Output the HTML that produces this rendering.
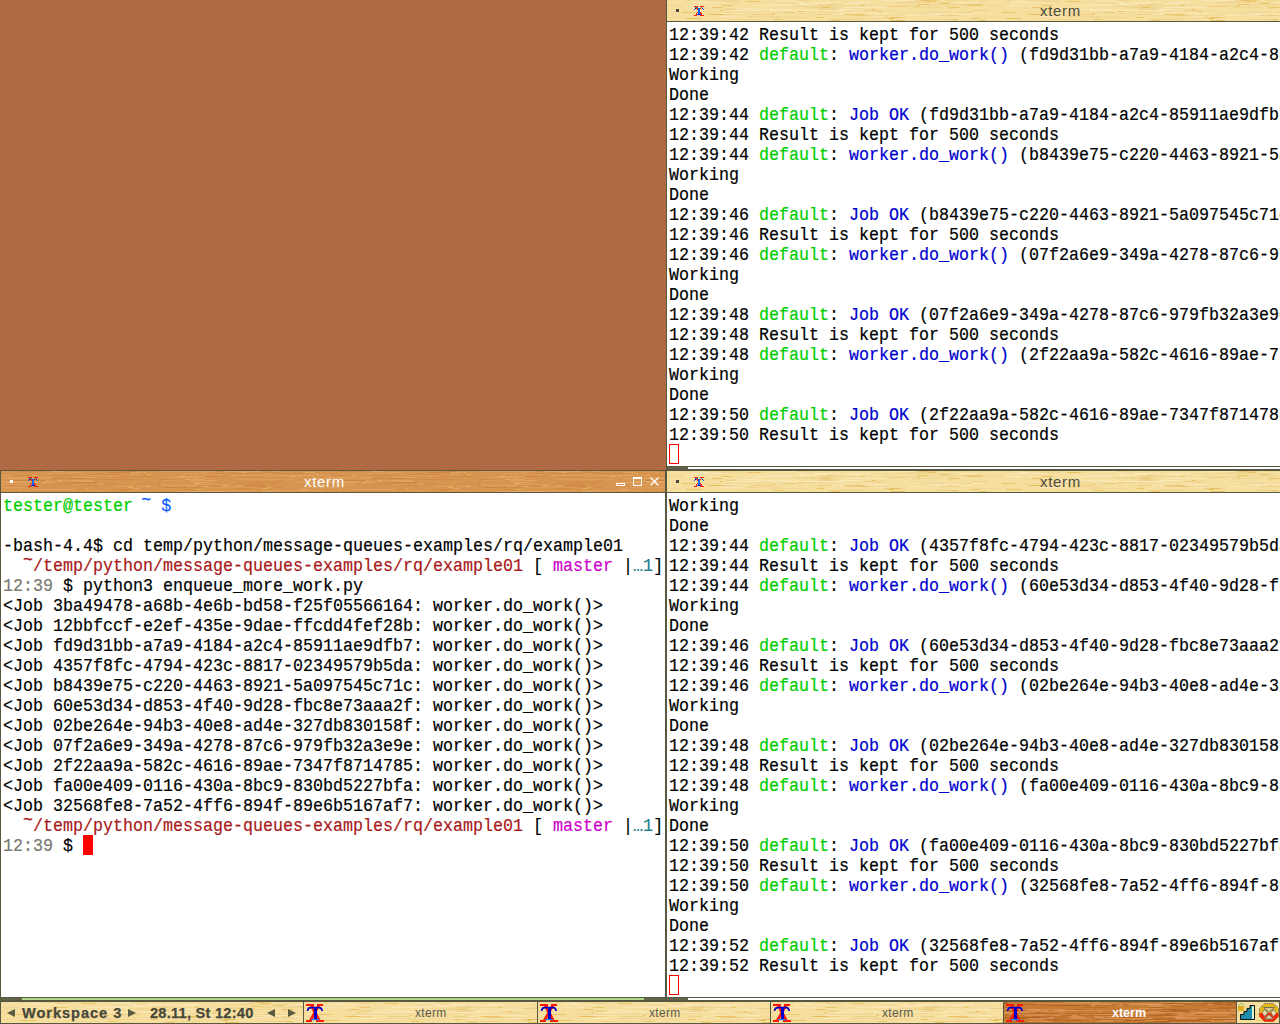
<!DOCTYPE html>
<html><head><meta charset="utf-8"><style>
html,body{margin:0;padding:0}
body{width:1280px;height:1024px;overflow:hidden;position:relative;background:#b06a43;font-family:"Liberation Mono",monospace}
.abs{position:absolute}
.ln{position:absolute;white-space:pre;font-family:"Liberation Mono",monospace;font-size:18px;line-height:20px;height:20px;color:#000;transform:scaleX(0.9259);transform-origin:0 0;-webkit-text-stroke:0.2px currentColor}
.dk{background:#585840}
.gp{background:#64644a}
.wl{background-color:#f3db9e;background-image:repeating-linear-gradient(180deg,rgba(235,200,110,0) 0px,rgba(235,200,110,0) 3px,rgba(232,196,100,.45) 3px,rgba(232,196,100,.45) 4px,rgba(255,240,190,.3) 4px,rgba(255,240,190,.3) 6px)}
.wa{background-color:#d8964e;background-image:repeating-linear-gradient(180deg,rgba(200,120,40,0) 0px,rgba(200,120,40,0) 3px,rgba(200,125,45,.5) 3px,rgba(200,125,45,.5) 4px,rgba(235,175,100,.4) 4px,rgba(235,175,100,.4) 6px)}
.wd{background-color:#c97c34;background-image:repeating-linear-gradient(180deg,rgba(180,100,30,0) 0px,rgba(180,100,30,0) 2px,rgba(170,95,25,.55) 2px,rgba(170,95,25,.55) 3px,rgba(230,160,90,.45) 3px,rgba(230,160,90,.45) 5px)}
.title{position:absolute;font-family:"Liberation Sans",sans-serif;font-size:15px;letter-spacing:0.7px;line-height:21px;height:21px;white-space:pre}
.tb{position:absolute;font-family:"Liberation Sans",sans-serif;white-space:pre;color:#5a5a40}
.tl{position:relative;top:-6px}
</style></head><body>
<svg width="0" height="0" style="position:absolute"><defs><pattern id="pwl" width="320" height="21" patternUnits="userSpaceOnUse"><rect width="320" height="21" fill="#f6de9e"/><rect x="291" y="2" width="19" height="1" fill="#fbebc0" opacity="0.7"/><rect x="253" y="14" width="33" height="1" fill="#ecd08a" opacity="0.6"/><rect x="107" y="3" width="34" height="1" fill="#f0d898" opacity="0.8"/><rect x="199" y="13" width="3" height="1" fill="#ecd08a" opacity="0.6"/><rect x="136" y="7" width="40" height="1" fill="#f0d898" opacity="0.8"/><rect x="162" y="0" width="4" height="1" fill="#ecd08a" opacity="0.6"/><rect x="277" y="0" width="27" height="1" fill="#ecd08a" opacity="0.6"/><rect x="216" y="0" width="36" height="1" fill="#fbebc0" opacity="0.7"/><rect x="224" y="15" width="38" height="1" fill="#fbebc0" opacity="0.7"/><rect x="176" y="7" width="46" height="1" fill="#fbebc0" opacity="0.7"/><rect x="235" y="9" width="4" height="1" fill="#fbebc0" opacity="0.7"/><rect x="284" y="20" width="9" height="1" fill="#f0d898" opacity="0.8"/><rect x="151" y="3" width="24" height="1" fill="#fbebc0" opacity="0.7"/><rect x="216" y="16" width="16" height="1" fill="#e0b038" opacity="0.55"/><rect x="155" y="9" width="40" height="1" fill="#fbebc0" opacity="0.7"/><rect x="258" y="12" width="40" height="1" fill="#f0d898" opacity="0.8"/><rect x="245" y="7" width="28" height="1" fill="#ecd08a" opacity="0.6"/><rect x="88" y="11" width="38" height="1" fill="#f0d898" opacity="0.8"/><rect x="44" y="14" width="24" height="1" fill="#e6c070" opacity="0.5"/><rect x="55" y="5" width="11" height="1" fill="#e0b038" opacity="0.55"/><rect x="189" y="15" width="49" height="1" fill="#f0d898" opacity="0.8"/><rect x="240" y="1" width="22" height="1" fill="#ecd08a" opacity="0.6"/><rect x="303" y="18" width="9" height="1" fill="#e0b038" opacity="0.55"/><rect x="86" y="16" width="17" height="1" fill="#fbebc0" opacity="0.7"/><rect x="102" y="17" width="38" height="1" fill="#ecd08a" opacity="0.6"/><rect x="207" y="16" width="25" height="1" fill="#fbebc0" opacity="0.7"/><rect x="180" y="14" width="17" height="1" fill="#e0b038" opacity="0.55"/><rect x="280" y="19" width="3" height="1" fill="#e6c070" opacity="0.5"/><rect x="262" y="4" width="36" height="1" fill="#f0d898" opacity="0.8"/><rect x="105" y="13" width="3" height="1" fill="#e0b038" opacity="0.55"/><rect x="186" y="18" width="38" height="1" fill="#f0d898" opacity="0.8"/><rect x="258" y="13" width="34" height="1" fill="#fbebc0" opacity="0.7"/><rect x="212" y="11" width="3" height="1" fill="#e6c070" opacity="0.5"/><rect x="276" y="19" width="15" height="1" fill="#e0b038" opacity="0.55"/><rect x="169" y="14" width="12" height="1" fill="#e0b038" opacity="0.55"/><rect x="117" y="20" width="14" height="1" fill="#ecd08a" opacity="0.6"/><rect x="299" y="5" width="16" height="1" fill="#e0b038" opacity="0.55"/><rect x="282" y="8" width="5" height="1" fill="#ecd08a" opacity="0.6"/><rect x="42" y="0" width="31" height="1" fill="#ecd08a" opacity="0.6"/><rect x="143" y="7" width="20" height="1" fill="#ecd08a" opacity="0.6"/><rect x="319" y="5" width="25" height="1" fill="#ecd08a" opacity="0.6"/><rect x="-1" y="5" width="25" height="1" fill="#ecd08a" opacity="0.6"/><rect x="35" y="5" width="8" height="1" fill="#e6c070" opacity="0.5"/><rect x="270" y="5" width="24" height="1" fill="#e6c070" opacity="0.5"/><rect x="150" y="14" width="13" height="1" fill="#e6c070" opacity="0.5"/><rect x="242" y="3" width="4" height="1" fill="#f0d898" opacity="0.8"/><rect x="197" y="10" width="16" height="1" fill="#e6c070" opacity="0.5"/><rect x="132" y="3" width="19" height="1" fill="#fbebc0" opacity="0.7"/><rect x="107" y="19" width="9" height="1" fill="#e0b038" opacity="0.55"/><rect x="115" y="0" width="28" height="1" fill="#ecd08a" opacity="0.6"/><rect x="18" y="5" width="31" height="1" fill="#fbebc0" opacity="0.7"/><rect x="218" y="17" width="16" height="1" fill="#e0b038" opacity="0.55"/><rect x="264" y="14" width="17" height="1" fill="#fbebc0" opacity="0.7"/><rect x="15" y="12" width="13" height="1" fill="#e0b038" opacity="0.55"/><rect x="164" y="20" width="9" height="1" fill="#e0b038" opacity="0.55"/><rect x="152" y="4" width="16" height="1" fill="#ecd08a" opacity="0.6"/><rect x="156" y="2" width="7" height="1" fill="#ecd08a" opacity="0.6"/><rect x="152" y="5" width="16" height="1" fill="#e6c070" opacity="0.5"/><rect x="129" y="4" width="3" height="1" fill="#e0b038" opacity="0.55"/><rect x="19" y="18" width="16" height="1" fill="#e0b038" opacity="0.55"/><rect x="291" y="14" width="13" height="1" fill="#fbebc0" opacity="0.7"/><rect x="260" y="1" width="9" height="1" fill="#e0b038" opacity="0.55"/><rect x="177" y="3" width="16" height="1" fill="#fbebc0" opacity="0.7"/><rect x="221" y="18" width="6" height="1" fill="#e0b038" opacity="0.55"/><rect x="53" y="12" width="21" height="1" fill="#f0d898" opacity="0.8"/><rect x="255" y="0" width="8" height="1" fill="#e0b038" opacity="0.55"/><rect x="205" y="9" width="3" height="1" fill="#e0b038" opacity="0.55"/><rect x="102" y="10" width="39" height="1" fill="#fbebc0" opacity="0.7"/><rect x="173" y="13" width="16" height="1" fill="#fbebc0" opacity="0.7"/><rect x="49" y="12" width="20" height="1" fill="#e6c070" opacity="0.5"/><rect x="273" y="15" width="20" height="1" fill="#e6c070" opacity="0.5"/><rect x="33" y="1" width="8" height="1" fill="#fbebc0" opacity="0.7"/><rect x="86" y="5" width="37" height="1" fill="#fbebc0" opacity="0.7"/><rect x="137" y="10" width="41" height="1" fill="#fbebc0" opacity="0.7"/><rect x="130" y="11" width="8" height="1" fill="#e0b038" opacity="0.55"/><rect x="58" y="9" width="10" height="1" fill="#e6c070" opacity="0.5"/><rect x="250" y="4" width="12" height="1" fill="#e0b038" opacity="0.55"/><rect x="53" y="10" width="3" height="1" fill="#e0b038" opacity="0.55"/><rect x="37" y="12" width="58" height="1" fill="#f0d898" opacity="0.8"/><rect x="64" y="10" width="10" height="1" fill="#fbebc0" opacity="0.7"/><rect x="300" y="12" width="4" height="1" fill="#e0b038" opacity="0.55"/><rect x="281" y="7" width="12" height="1" fill="#e0b038" opacity="0.55"/><rect x="136" y="11" width="21" height="1" fill="#ecd08a" opacity="0.6"/><rect x="273" y="3" width="10" height="1" fill="#e0b038" opacity="0.55"/><rect x="55" y="1" width="12" height="1" fill="#e6c070" opacity="0.5"/><rect x="314" y="0" width="8" height="1" fill="#ecd08a" opacity="0.6"/><rect x="-6" y="0" width="8" height="1" fill="#ecd08a" opacity="0.6"/><rect x="58" y="1" width="15" height="1" fill="#f0d898" opacity="0.8"/><rect x="300" y="13" width="13" height="1" fill="#fbebc0" opacity="0.7"/><rect x="230" y="5" width="18" height="1" fill="#ecd08a" opacity="0.6"/><rect x="52" y="13" width="27" height="1" fill="#fbebc0" opacity="0.7"/><rect x="150" y="17" width="7" height="1" fill="#e0b038" opacity="0.55"/><rect x="161" y="3" width="16" height="1" fill="#f0d898" opacity="0.8"/><rect x="20" y="0" width="3" height="1" fill="#e6c070" opacity="0.5"/><rect x="305" y="10" width="17" height="1" fill="#e6c070" opacity="0.5"/><rect x="-15" y="10" width="17" height="1" fill="#e6c070" opacity="0.5"/><rect x="160" y="12" width="7" height="1" fill="#f0d898" opacity="0.8"/><rect x="162" y="19" width="32" height="1" fill="#ecd08a" opacity="0.6"/><rect x="128" y="6" width="37" height="1" fill="#ecd08a" opacity="0.6"/><rect x="182" y="8" width="14" height="1" fill="#f0d898" opacity="0.8"/><rect x="106" y="9" width="6" height="1" fill="#e0b038" opacity="0.55"/><rect x="184" y="2" width="20" height="1" fill="#fbebc0" opacity="0.7"/><rect x="229" y="2" width="39" height="1" fill="#ecd08a" opacity="0.6"/><rect x="116" y="12" width="12" height="1" fill="#e6c070" opacity="0.5"/><rect x="167" y="5" width="23" height="1" fill="#ecd08a" opacity="0.6"/><rect x="155" y="7" width="8" height="1" fill="#e0b038" opacity="0.55"/><rect x="278" y="19" width="8" height="1" fill="#ecd08a" opacity="0.6"/><rect x="112" y="0" width="18" height="1" fill="#fbebc0" opacity="0.7"/><rect x="37" y="8" width="38" height="1" fill="#f0d898" opacity="0.8"/><rect x="38" y="0" width="3" height="1" fill="#ecd08a" opacity="0.6"/><rect x="183" y="15" width="18" height="1" fill="#e6c070" opacity="0.5"/><rect x="51" y="16" width="23" height="1" fill="#fbebc0" opacity="0.7"/><rect x="260" y="5" width="14" height="1" fill="#ecd08a" opacity="0.6"/><rect x="72" y="10" width="22" height="1" fill="#fbebc0" opacity="0.7"/><rect x="263" y="19" width="21" height="1" fill="#ecd08a" opacity="0.6"/><rect x="105" y="4" width="37" height="1" fill="#fbebc0" opacity="0.7"/><rect x="161" y="19" width="38" height="1" fill="#ecd08a" opacity="0.6"/><rect x="91" y="9" width="30" height="1" fill="#fbebc0" opacity="0.7"/><rect x="80" y="1" width="14" height="1" fill="#e0b038" opacity="0.55"/><rect x="129" y="2" width="46" height="1" fill="#fbebc0" opacity="0.7"/><rect x="220" y="17" width="19" height="1" fill="#f0d898" opacity="0.8"/><rect x="224" y="17" width="10" height="1" fill="#e0b038" opacity="0.55"/><rect x="202" y="10" width="13" height="1" fill="#ecd08a" opacity="0.6"/><rect x="248" y="0" width="23" height="1" fill="#e6c070" opacity="0.5"/><rect x="292" y="0" width="6" height="1" fill="#f0d898" opacity="0.8"/><rect x="296" y="4" width="21" height="1" fill="#e6c070" opacity="0.5"/><rect x="70" y="8" width="20" height="1" fill="#fbebc0" opacity="0.7"/><rect x="288" y="12" width="14" height="1" fill="#f0d898" opacity="0.8"/><rect x="45" y="7" width="10" height="1" fill="#e0b038" opacity="0.55"/><rect x="90" y="16" width="23" height="1" fill="#ecd08a" opacity="0.6"/><rect x="224" y="20" width="14" height="1" fill="#e0b038" opacity="0.55"/><rect x="122" y="10" width="34" height="1" fill="#fbebc0" opacity="0.7"/><rect x="115" y="13" width="24" height="1" fill="#f0d898" opacity="0.8"/><rect x="312" y="20" width="7" height="1" fill="#e0b038" opacity="0.55"/><rect x="24" y="2" width="35" height="1" fill="#fbebc0" opacity="0.7"/><rect x="81" y="16" width="9" height="1" fill="#e6c070" opacity="0.5"/><rect x="152" y="9" width="20" height="1" fill="#e6c070" opacity="0.5"/><rect x="84" y="14" width="22" height="1" fill="#e6c070" opacity="0.5"/><rect x="63" y="19" width="35" height="1" fill="#ecd08a" opacity="0.6"/><rect x="193" y="5" width="5" height="1" fill="#e0b038" opacity="0.55"/><rect x="218" y="6" width="21" height="1" fill="#e6c070" opacity="0.5"/><rect x="253" y="12" width="25" height="1" fill="#ecd08a" opacity="0.6"/><rect x="263" y="5" width="37" height="1" fill="#f0d898" opacity="0.8"/><rect x="268" y="2" width="19" height="1" fill="#ecd08a" opacity="0.6"/><rect x="136" y="2" width="11" height="1" fill="#ecd08a" opacity="0.6"/><rect x="41" y="14" width="16" height="1" fill="#e0b038" opacity="0.55"/><rect x="195" y="13" width="28" height="1" fill="#fbebc0" opacity="0.7"/><rect x="166" y="14" width="11" height="1" fill="#fbebc0" opacity="0.7"/><rect x="249" y="6" width="4" height="1" fill="#e0b038" opacity="0.55"/><rect x="307" y="17" width="29" height="1" fill="#f0d898" opacity="0.8"/><rect x="-13" y="17" width="29" height="1" fill="#f0d898" opacity="0.8"/><rect x="151" y="8" width="18" height="1" fill="#ecd08a" opacity="0.6"/><rect x="286" y="0" width="15" height="1" fill="#f0d898" opacity="0.8"/><rect x="224" y="18" width="3" height="1" fill="#e0b038" opacity="0.55"/></pattern><pattern id="pwa" width="320" height="21" patternUnits="userSpaceOnUse"><rect width="320" height="21" fill="#d8954f"/><rect x="46" y="2" width="26" height="1" fill="#e4ab6a" opacity="0.7"/><rect x="157" y="8" width="16" height="1" fill="#c9803c" opacity="0.6"/><rect x="18" y="18" width="4" height="1" fill="#f0c070" opacity="0.5"/><rect x="201" y="16" width="26" height="1" fill="#d08a45" opacity="0.8"/><rect x="227" y="16" width="5" height="1" fill="#f0c070" opacity="0.5"/><rect x="14" y="11" width="32" height="1" fill="#e4ab6a" opacity="0.7"/><rect x="194" y="13" width="59" height="1" fill="#e0a060" opacity="0.8"/><rect x="84" y="17" width="4" height="1" fill="#f0c070" opacity="0.5"/><rect x="118" y="0" width="14" height="1" fill="#c9803c" opacity="0.6"/><rect x="88" y="4" width="35" height="1" fill="#e0a060" opacity="0.8"/><rect x="184" y="16" width="7" height="1" fill="#f0c070" opacity="0.5"/><rect x="228" y="13" width="36" height="1" fill="#c9803c" opacity="0.6"/><rect x="303" y="11" width="26" height="1" fill="#e0a060" opacity="0.8"/><rect x="-17" y="11" width="26" height="1" fill="#e0a060" opacity="0.8"/><rect x="82" y="12" width="32" height="1" fill="#d08a45" opacity="0.8"/><rect x="127" y="15" width="5" height="1" fill="#f0c070" opacity="0.5"/><rect x="256" y="16" width="25" height="1" fill="#d08a45" opacity="0.8"/><rect x="236" y="11" width="39" height="1" fill="#d08a45" opacity="0.8"/><rect x="233" y="15" width="4" height="1" fill="#f0c070" opacity="0.5"/><rect x="85" y="19" width="20" height="1" fill="#e0a060" opacity="0.8"/><rect x="158" y="9" width="35" height="1" fill="#d08a45" opacity="0.8"/><rect x="265" y="16" width="7" height="1" fill="#f0c070" opacity="0.5"/><rect x="208" y="9" width="4" height="1" fill="#f0c070" opacity="0.5"/><rect x="262" y="11" width="7" height="1" fill="#d08a45" opacity="0.8"/><rect x="4" y="6" width="50" height="1" fill="#e0a060" opacity="0.8"/><rect x="30" y="18" width="44" height="1" fill="#e4ab6a" opacity="0.7"/><rect x="139" y="18" width="17" height="1" fill="#e4ab6a" opacity="0.7"/><rect x="267" y="4" width="20" height="1" fill="#e4ab6a" opacity="0.7"/><rect x="107" y="1" width="30" height="1" fill="#c9803c" opacity="0.6"/><rect x="29" y="11" width="26" height="1" fill="#e4ab6a" opacity="0.7"/><rect x="127" y="0" width="8" height="1" fill="#c9803c" opacity="0.6"/><rect x="34" y="0" width="5" height="1" fill="#e4ab6a" opacity="0.7"/><rect x="191" y="8" width="11" height="1" fill="#e4ab6a" opacity="0.7"/><rect x="94" y="16" width="3" height="1" fill="#c9803c" opacity="0.6"/><rect x="301" y="1" width="18" height="1" fill="#d08a45" opacity="0.8"/><rect x="18" y="0" width="25" height="1" fill="#c9803c" opacity="0.6"/><rect x="57" y="9" width="5" height="1" fill="#f0c070" opacity="0.5"/><rect x="15" y="9" width="31" height="1" fill="#d08a45" opacity="0.8"/><rect x="309" y="1" width="5" height="1" fill="#f0c070" opacity="0.5"/><rect x="318" y="4" width="33" height="1" fill="#d08a45" opacity="0.8"/><rect x="-2" y="4" width="33" height="1" fill="#d08a45" opacity="0.8"/><rect x="47" y="10" width="9" height="1" fill="#c9803c" opacity="0.6"/><rect x="229" y="4" width="36" height="1" fill="#e4ab6a" opacity="0.7"/><rect x="201" y="15" width="7" height="1" fill="#f0c070" opacity="0.5"/><rect x="73" y="10" width="19" height="1" fill="#e0a060" opacity="0.8"/><rect x="310" y="13" width="44" height="1" fill="#e0a060" opacity="0.8"/><rect x="-10" y="13" width="44" height="1" fill="#e0a060" opacity="0.8"/><rect x="285" y="4" width="45" height="1" fill="#e4ab6a" opacity="0.7"/><rect x="-35" y="4" width="45" height="1" fill="#e4ab6a" opacity="0.7"/><rect x="129" y="1" width="11" height="1" fill="#e4ab6a" opacity="0.7"/><rect x="87" y="3" width="32" height="1" fill="#c9803c" opacity="0.6"/><rect x="260" y="1" width="18" height="1" fill="#c9803c" opacity="0.6"/><rect x="227" y="2" width="19" height="1" fill="#c9803c" opacity="0.6"/><rect x="302" y="7" width="42" height="1" fill="#e4ab6a" opacity="0.7"/><rect x="-18" y="7" width="42" height="1" fill="#e4ab6a" opacity="0.7"/><rect x="184" y="8" width="6" height="1" fill="#f0c070" opacity="0.5"/><rect x="269" y="0" width="12" height="1" fill="#e0a060" opacity="0.8"/><rect x="196" y="13" width="13" height="1" fill="#e4ab6a" opacity="0.7"/><rect x="262" y="2" width="18" height="1" fill="#e4ab6a" opacity="0.7"/><rect x="51" y="0" width="14" height="1" fill="#e4ab6a" opacity="0.7"/><rect x="53" y="6" width="4" height="1" fill="#c9803c" opacity="0.6"/><rect x="237" y="14" width="5" height="1" fill="#f0c070" opacity="0.5"/><rect x="194" y="6" width="4" height="1" fill="#f0c070" opacity="0.5"/><rect x="217" y="16" width="4" height="1" fill="#d08a45" opacity="0.8"/><rect x="302" y="1" width="6" height="1" fill="#f0c070" opacity="0.5"/><rect x="297" y="5" width="3" height="1" fill="#f0c070" opacity="0.5"/><rect x="187" y="0" width="36" height="1" fill="#d08a45" opacity="0.8"/><rect x="312" y="11" width="21" height="1" fill="#e4ab6a" opacity="0.7"/><rect x="-8" y="11" width="21" height="1" fill="#e4ab6a" opacity="0.7"/><rect x="157" y="0" width="58" height="1" fill="#e0a060" opacity="0.8"/><rect x="51" y="3" width="22" height="1" fill="#d08a45" opacity="0.8"/><rect x="8" y="14" width="6" height="1" fill="#c9803c" opacity="0.6"/><rect x="248" y="14" width="16" height="1" fill="#d08a45" opacity="0.8"/><rect x="314" y="2" width="3" height="1" fill="#f0c070" opacity="0.5"/><rect x="12" y="11" width="22" height="1" fill="#e0a060" opacity="0.8"/><rect x="112" y="15" width="15" height="1" fill="#e4ab6a" opacity="0.7"/><rect x="292" y="11" width="28" height="1" fill="#e4ab6a" opacity="0.7"/><rect x="71" y="11" width="28" height="1" fill="#d08a45" opacity="0.8"/><rect x="130" y="3" width="10" height="1" fill="#e4ab6a" opacity="0.7"/><rect x="315" y="10" width="44" height="1" fill="#e4ab6a" opacity="0.7"/><rect x="-5" y="10" width="44" height="1" fill="#e4ab6a" opacity="0.7"/><rect x="108" y="3" width="4" height="1" fill="#d08a45" opacity="0.8"/><rect x="240" y="1" width="6" height="1" fill="#f0c070" opacity="0.5"/><rect x="183" y="14" width="12" height="1" fill="#e0a060" opacity="0.8"/><rect x="137" y="15" width="36" height="1" fill="#e0a060" opacity="0.8"/><rect x="214" y="15" width="21" height="1" fill="#d08a45" opacity="0.8"/><rect x="118" y="5" width="34" height="1" fill="#d08a45" opacity="0.8"/><rect x="132" y="17" width="6" height="1" fill="#f0c070" opacity="0.5"/><rect x="299" y="18" width="9" height="1" fill="#e4ab6a" opacity="0.7"/><rect x="182" y="5" width="37" height="1" fill="#e4ab6a" opacity="0.7"/><rect x="213" y="2" width="8" height="1" fill="#c9803c" opacity="0.6"/><rect x="65" y="9" width="27" height="1" fill="#e4ab6a" opacity="0.7"/><rect x="168" y="14" width="14" height="1" fill="#c9803c" opacity="0.6"/><rect x="146" y="3" width="4" height="1" fill="#f0c070" opacity="0.5"/><rect x="216" y="3" width="5" height="1" fill="#f0c070" opacity="0.5"/><rect x="127" y="16" width="5" height="1" fill="#f0c070" opacity="0.5"/><rect x="80" y="14" width="18" height="1" fill="#c9803c" opacity="0.6"/><rect x="183" y="18" width="12" height="1" fill="#d08a45" opacity="0.8"/><rect x="225" y="0" width="27" height="1" fill="#d08a45" opacity="0.8"/><rect x="201" y="16" width="6" height="1" fill="#c9803c" opacity="0.6"/><rect x="140" y="12" width="19" height="1" fill="#d08a45" opacity="0.8"/><rect x="241" y="11" width="38" height="1" fill="#d08a45" opacity="0.8"/><rect x="41" y="7" width="37" height="1" fill="#e0a060" opacity="0.8"/><rect x="96" y="12" width="6" height="1" fill="#f0c070" opacity="0.5"/><rect x="160" y="14" width="36" height="1" fill="#e4ab6a" opacity="0.7"/><rect x="90" y="3" width="4" height="1" fill="#d08a45" opacity="0.8"/><rect x="110" y="18" width="27" height="1" fill="#d08a45" opacity="0.8"/><rect x="51" y="12" width="38" height="1" fill="#c9803c" opacity="0.6"/><rect x="140" y="18" width="15" height="1" fill="#c9803c" opacity="0.6"/><rect x="313" y="4" width="3" height="1" fill="#d08a45" opacity="0.8"/><rect x="222" y="15" width="5" height="1" fill="#f0c070" opacity="0.5"/><rect x="289" y="5" width="6" height="1" fill="#f0c070" opacity="0.5"/><rect x="37" y="11" width="3" height="1" fill="#c9803c" opacity="0.6"/><rect x="272" y="2" width="34" height="1" fill="#d08a45" opacity="0.8"/><rect x="235" y="8" width="59" height="1" fill="#e0a060" opacity="0.8"/><rect x="235" y="0" width="3" height="1" fill="#f0c070" opacity="0.5"/><rect x="177" y="5" width="6" height="1" fill="#f0c070" opacity="0.5"/><rect x="69" y="1" width="13" height="1" fill="#e0a060" opacity="0.8"/><rect x="195" y="14" width="21" height="1" fill="#d08a45" opacity="0.8"/><rect x="5" y="9" width="38" height="1" fill="#c9803c" opacity="0.6"/><rect x="0" y="11" width="5" height="1" fill="#d08a45" opacity="0.8"/><rect x="195" y="18" width="6" height="1" fill="#f0c070" opacity="0.5"/><rect x="157" y="15" width="11" height="1" fill="#c9803c" opacity="0.6"/><rect x="275" y="9" width="7" height="1" fill="#d08a45" opacity="0.8"/><rect x="160" y="9" width="24" height="1" fill="#e0a060" opacity="0.8"/><rect x="201" y="16" width="56" height="1" fill="#e0a060" opacity="0.8"/><rect x="260" y="20" width="16" height="1" fill="#e4ab6a" opacity="0.7"/><rect x="305" y="16" width="12" height="1" fill="#d08a45" opacity="0.8"/><rect x="45" y="9" width="3" height="1" fill="#f0c070" opacity="0.5"/><rect x="234" y="17" width="17" height="1" fill="#c9803c" opacity="0.6"/><rect x="142" y="1" width="3" height="1" fill="#f0c070" opacity="0.5"/><rect x="194" y="11" width="16" height="1" fill="#e4ab6a" opacity="0.7"/><rect x="182" y="2" width="24" height="1" fill="#e0a060" opacity="0.8"/><rect x="185" y="5" width="34" height="1" fill="#d08a45" opacity="0.8"/><rect x="149" y="14" width="11" height="1" fill="#d08a45" opacity="0.8"/><rect x="110" y="8" width="23" height="1" fill="#d08a45" opacity="0.8"/><rect x="50" y="7" width="33" height="1" fill="#c9803c" opacity="0.6"/><rect x="191" y="5" width="25" height="1" fill="#c9803c" opacity="0.6"/><rect x="69" y="7" width="20" height="1" fill="#c9803c" opacity="0.6"/><rect x="193" y="12" width="5" height="1" fill="#f0c070" opacity="0.5"/><rect x="304" y="16" width="40" height="1" fill="#e0a060" opacity="0.8"/><rect x="-16" y="16" width="40" height="1" fill="#e0a060" opacity="0.8"/><rect x="204" y="20" width="51" height="1" fill="#e0a060" opacity="0.8"/><rect x="272" y="19" width="43" height="1" fill="#e0a060" opacity="0.8"/><rect x="188" y="9" width="28" height="1" fill="#e4ab6a" opacity="0.7"/><rect x="89" y="8" width="25" height="1" fill="#d08a45" opacity="0.8"/><rect x="244" y="2" width="14" height="1" fill="#d08a45" opacity="0.8"/><rect x="194" y="4" width="4" height="1" fill="#e0a060" opacity="0.8"/><rect x="179" y="5" width="25" height="1" fill="#e4ab6a" opacity="0.7"/><rect x="223" y="0" width="37" height="1" fill="#e4ab6a" opacity="0.7"/><rect x="121" y="19" width="27" height="1" fill="#e0a060" opacity="0.8"/><rect x="145" y="15" width="4" height="1" fill="#f0c070" opacity="0.5"/><rect x="161" y="6" width="34" height="1" fill="#e0a060" opacity="0.8"/><rect x="72" y="6" width="24" height="1" fill="#e4ab6a" opacity="0.7"/><rect x="72" y="13" width="26" height="1" fill="#e0a060" opacity="0.8"/><rect x="45" y="10" width="15" height="1" fill="#e0a060" opacity="0.8"/><rect x="122" y="19" width="5" height="1" fill="#c9803c" opacity="0.6"/><rect x="190" y="20" width="52" height="1" fill="#e0a060" opacity="0.8"/><rect x="31" y="4" width="4" height="1" fill="#f0c070" opacity="0.5"/><rect x="220" y="14" width="20" height="1" fill="#e4ab6a" opacity="0.7"/><rect x="164" y="16" width="39" height="1" fill="#c9803c" opacity="0.6"/><rect x="173" y="20" width="48" height="1" fill="#e4ab6a" opacity="0.7"/><rect x="202" y="7" width="3" height="1" fill="#f0c070" opacity="0.5"/><rect x="242" y="15" width="23" height="1" fill="#d08a45" opacity="0.8"/><rect x="318" y="19" width="3" height="1" fill="#f0c070" opacity="0.5"/><rect x="-2" y="19" width="3" height="1" fill="#f0c070" opacity="0.5"/><rect x="261" y="17" width="6" height="1" fill="#f0c070" opacity="0.5"/><rect x="232" y="5" width="29" height="1" fill="#d08a45" opacity="0.8"/><rect x="268" y="14" width="5" height="1" fill="#d08a45" opacity="0.8"/></pattern><pattern id="pwd" width="240" height="21" patternUnits="userSpaceOnUse"><rect width="240" height="21" fill="#c77c36"/><rect x="151" y="17" width="11" height="1" fill="#a85c1c" opacity="0.6"/><rect x="234" y="19" width="33" height="1" fill="#d89050" opacity="0.8"/><rect x="-6" y="19" width="33" height="1" fill="#d89050" opacity="0.8"/><rect x="155" y="0" width="33" height="1" fill="#e0a060" opacity="0.6"/><rect x="141" y="7" width="15" height="1" fill="#d89050" opacity="0.8"/><rect x="138" y="17" width="33" height="1" fill="#b86a28" opacity="0.8"/><rect x="163" y="4" width="17" height="1" fill="#b86a28" opacity="0.8"/><rect x="222" y="16" width="27" height="1" fill="#a85c1c" opacity="0.6"/><rect x="-18" y="16" width="27" height="1" fill="#a85c1c" opacity="0.6"/><rect x="171" y="2" width="13" height="1" fill="#e0a060" opacity="0.6"/><rect x="77" y="0" width="20" height="1" fill="#e0a060" opacity="0.6"/><rect x="152" y="12" width="48" height="1" fill="#b86a28" opacity="0.8"/><rect x="101" y="18" width="31" height="1" fill="#b86a28" opacity="0.8"/><rect x="224" y="11" width="9" height="1" fill="#a85c1c" opacity="0.6"/><rect x="34" y="15" width="16" height="1" fill="#e0a060" opacity="0.6"/><rect x="172" y="13" width="52" height="1" fill="#d89050" opacity="0.8"/><rect x="107" y="16" width="56" height="1" fill="#d89050" opacity="0.8"/><rect x="146" y="11" width="37" height="1" fill="#b86a28" opacity="0.8"/><rect x="149" y="7" width="24" height="1" fill="#b86a28" opacity="0.8"/><rect x="219" y="8" width="13" height="1" fill="#e0a060" opacity="0.6"/><rect x="138" y="18" width="39" height="1" fill="#d89050" opacity="0.8"/><rect x="182" y="20" width="16" height="1" fill="#e0a060" opacity="0.6"/><rect x="72" y="3" width="7" height="1" fill="#d89050" opacity="0.8"/><rect x="218" y="20" width="33" height="1" fill="#b86a28" opacity="0.8"/><rect x="-22" y="20" width="33" height="1" fill="#b86a28" opacity="0.8"/><rect x="88" y="2" width="29" height="1" fill="#e0a060" opacity="0.6"/><rect x="5" y="9" width="30" height="1" fill="#a85c1c" opacity="0.6"/><rect x="223" y="3" width="5" height="1" fill="#b86a28" opacity="0.8"/><rect x="96" y="18" width="24" height="1" fill="#e0a060" opacity="0.6"/><rect x="129" y="7" width="5" height="1" fill="#d89050" opacity="0.8"/><rect x="1" y="2" width="9" height="1" fill="#d89050" opacity="0.8"/><rect x="50" y="13" width="21" height="1" fill="#e0a060" opacity="0.6"/><rect x="39" y="1" width="58" height="1" fill="#d89050" opacity="0.8"/><rect x="80" y="11" width="11" height="1" fill="#d89050" opacity="0.8"/><rect x="96" y="14" width="36" height="1" fill="#b86a28" opacity="0.8"/><rect x="164" y="19" width="46" height="1" fill="#b86a28" opacity="0.8"/><rect x="158" y="16" width="20" height="1" fill="#e0a060" opacity="0.6"/><rect x="162" y="7" width="22" height="1" fill="#b86a28" opacity="0.8"/><rect x="66" y="16" width="22" height="1" fill="#b86a28" opacity="0.8"/><rect x="2" y="13" width="40" height="1" fill="#d89050" opacity="0.8"/><rect x="5" y="12" width="42" height="1" fill="#d89050" opacity="0.8"/><rect x="15" y="20" width="24" height="1" fill="#a85c1c" opacity="0.6"/><rect x="90" y="11" width="41" height="1" fill="#b86a28" opacity="0.8"/><rect x="188" y="15" width="4" height="1" fill="#d89050" opacity="0.8"/><rect x="173" y="0" width="26" height="1" fill="#e0a060" opacity="0.6"/><rect x="160" y="14" width="22" height="1" fill="#d89050" opacity="0.8"/><rect x="45" y="11" width="14" height="1" fill="#d89050" opacity="0.8"/><rect x="194" y="11" width="57" height="1" fill="#d89050" opacity="0.8"/><rect x="-46" y="11" width="57" height="1" fill="#d89050" opacity="0.8"/><rect x="76" y="12" width="9" height="1" fill="#d89050" opacity="0.8"/><rect x="145" y="4" width="22" height="1" fill="#e0a060" opacity="0.6"/><rect x="167" y="8" width="18" height="1" fill="#a85c1c" opacity="0.6"/><rect x="47" y="13" width="44" height="1" fill="#d89050" opacity="0.8"/><rect x="26" y="19" width="23" height="1" fill="#e0a060" opacity="0.6"/><rect x="172" y="7" width="31" height="1" fill="#d89050" opacity="0.8"/><rect x="20" y="10" width="16" height="1" fill="#a85c1c" opacity="0.6"/><rect x="69" y="7" width="10" height="1" fill="#b86a28" opacity="0.8"/><rect x="135" y="6" width="23" height="1" fill="#e0a060" opacity="0.6"/><rect x="221" y="8" width="24" height="1" fill="#a85c1c" opacity="0.6"/><rect x="-19" y="8" width="24" height="1" fill="#a85c1c" opacity="0.6"/><rect x="206" y="19" width="25" height="1" fill="#e0a060" opacity="0.6"/><rect x="107" y="9" width="36" height="1" fill="#a85c1c" opacity="0.6"/><rect x="118" y="11" width="43" height="1" fill="#d89050" opacity="0.8"/><rect x="74" y="13" width="39" height="1" fill="#b86a28" opacity="0.8"/><rect x="9" y="13" width="12" height="1" fill="#b86a28" opacity="0.8"/><rect x="1" y="15" width="35" height="1" fill="#a85c1c" opacity="0.6"/><rect x="143" y="7" width="5" height="1" fill="#b86a28" opacity="0.8"/><rect x="214" y="16" width="21" height="1" fill="#b86a28" opacity="0.8"/><rect x="227" y="7" width="58" height="1" fill="#d89050" opacity="0.8"/><rect x="-13" y="7" width="58" height="1" fill="#d89050" opacity="0.8"/><rect x="219" y="18" width="21" height="1" fill="#e0a060" opacity="0.6"/><rect x="207" y="7" width="5" height="1" fill="#e0a060" opacity="0.6"/><rect x="231" y="16" width="15" height="1" fill="#e0a060" opacity="0.6"/><rect x="-9" y="16" width="15" height="1" fill="#e0a060" opacity="0.6"/><rect x="147" y="1" width="3" height="1" fill="#b86a28" opacity="0.8"/><rect x="190" y="3" width="13" height="1" fill="#b86a28" opacity="0.8"/><rect x="61" y="0" width="36" height="1" fill="#d89050" opacity="0.8"/><rect x="13" y="19" width="10" height="1" fill="#b86a28" opacity="0.8"/><rect x="32" y="8" width="58" height="1" fill="#d89050" opacity="0.8"/><rect x="207" y="1" width="25" height="1" fill="#b86a28" opacity="0.8"/><rect x="50" y="3" width="37" height="1" fill="#a85c1c" opacity="0.6"/><rect x="43" y="7" width="20" height="1" fill="#e0a060" opacity="0.6"/><rect x="210" y="0" width="34" height="1" fill="#a85c1c" opacity="0.6"/><rect x="-30" y="0" width="34" height="1" fill="#a85c1c" opacity="0.6"/><rect x="12" y="8" width="18" height="1" fill="#b86a28" opacity="0.8"/><rect x="158" y="16" width="36" height="1" fill="#d89050" opacity="0.8"/><rect x="13" y="15" width="23" height="1" fill="#b86a28" opacity="0.8"/><rect x="219" y="1" width="11" height="1" fill="#e0a060" opacity="0.6"/><rect x="31" y="1" width="7" height="1" fill="#e0a060" opacity="0.6"/><rect x="8" y="2" width="35" height="1" fill="#b86a28" opacity="0.8"/><rect x="80" y="5" width="23" height="1" fill="#b86a28" opacity="0.8"/><rect x="89" y="12" width="27" height="1" fill="#e0a060" opacity="0.6"/><rect x="92" y="8" width="15" height="1" fill="#d89050" opacity="0.8"/><rect x="109" y="3" width="11" height="1" fill="#d89050" opacity="0.8"/><rect x="183" y="12" width="8" height="1" fill="#e0a060" opacity="0.6"/><rect x="10" y="11" width="32" height="1" fill="#a85c1c" opacity="0.6"/><rect x="162" y="1" width="42" height="1" fill="#b86a28" opacity="0.8"/><rect x="13" y="11" width="43" height="1" fill="#b86a28" opacity="0.8"/><rect x="194" y="10" width="29" height="1" fill="#b86a28" opacity="0.8"/><rect x="117" y="0" width="18" height="1" fill="#b86a28" opacity="0.8"/><rect x="137" y="8" width="7" height="1" fill="#a85c1c" opacity="0.6"/><rect x="57" y="13" width="11" height="1" fill="#b86a28" opacity="0.8"/><rect x="239" y="10" width="26" height="1" fill="#e0a060" opacity="0.6"/><rect x="-1" y="10" width="26" height="1" fill="#e0a060" opacity="0.6"/><rect x="31" y="14" width="47" height="1" fill="#d89050" opacity="0.8"/><rect x="208" y="16" width="27" height="1" fill="#e0a060" opacity="0.6"/><rect x="187" y="10" width="39" height="1" fill="#e0a060" opacity="0.6"/><rect x="207" y="18" width="3" height="1" fill="#e0a060" opacity="0.6"/><rect x="36" y="7" width="27" height="1" fill="#b86a28" opacity="0.8"/><rect x="134" y="2" width="39" height="1" fill="#e0a060" opacity="0.6"/><rect x="168" y="12" width="14" height="1" fill="#e0a060" opacity="0.6"/><rect x="87" y="3" width="4" height="1" fill="#e0a060" opacity="0.6"/><rect x="172" y="15" width="21" height="1" fill="#e0a060" opacity="0.6"/><rect x="204" y="2" width="5" height="1" fill="#d89050" opacity="0.8"/><rect x="27" y="17" width="9" height="1" fill="#a85c1c" opacity="0.6"/><rect x="140" y="10" width="39" height="1" fill="#e0a060" opacity="0.6"/><rect x="211" y="2" width="18" height="1" fill="#a85c1c" opacity="0.6"/><rect x="165" y="7" width="32" height="1" fill="#a85c1c" opacity="0.6"/><rect x="64" y="11" width="41" height="1" fill="#b86a28" opacity="0.8"/><rect x="89" y="17" width="29" height="1" fill="#b86a28" opacity="0.8"/><rect x="96" y="16" width="18" height="1" fill="#e0a060" opacity="0.6"/><rect x="215" y="5" width="29" height="1" fill="#b86a28" opacity="0.8"/><rect x="-25" y="5" width="29" height="1" fill="#b86a28" opacity="0.8"/><rect x="39" y="20" width="28" height="1" fill="#b86a28" opacity="0.8"/><rect x="41" y="3" width="34" height="1" fill="#a85c1c" opacity="0.6"/><rect x="234" y="16" width="31" height="1" fill="#b86a28" opacity="0.8"/><rect x="-6" y="16" width="31" height="1" fill="#b86a28" opacity="0.8"/><rect x="34" y="8" width="15" height="1" fill="#a85c1c" opacity="0.6"/><rect x="149" y="16" width="23" height="1" fill="#a85c1c" opacity="0.6"/><rect x="217" y="17" width="21" height="1" fill="#a85c1c" opacity="0.6"/><rect x="152" y="18" width="40" height="1" fill="#b86a28" opacity="0.8"/><rect x="227" y="6" width="22" height="1" fill="#d89050" opacity="0.8"/><rect x="-13" y="6" width="22" height="1" fill="#d89050" opacity="0.8"/><rect x="68" y="15" width="27" height="1" fill="#e0a060" opacity="0.6"/><rect x="44" y="18" width="26" height="1" fill="#a85c1c" opacity="0.6"/><rect x="82" y="15" width="12" height="1" fill="#a85c1c" opacity="0.6"/><rect x="178" y="15" width="47" height="1" fill="#b86a28" opacity="0.8"/><rect x="119" y="18" width="38" height="1" fill="#a85c1c" opacity="0.6"/><rect x="123" y="2" width="28" height="1" fill="#e0a060" opacity="0.6"/><rect x="119" y="7" width="18" height="1" fill="#e0a060" opacity="0.6"/><rect x="55" y="8" width="18" height="1" fill="#e0a060" opacity="0.6"/><rect x="198" y="8" width="11" height="1" fill="#a85c1c" opacity="0.6"/><rect x="159" y="1" width="19" height="1" fill="#a85c1c" opacity="0.6"/><rect x="221" y="1" width="23" height="1" fill="#a85c1c" opacity="0.6"/><rect x="-19" y="1" width="23" height="1" fill="#a85c1c" opacity="0.6"/><rect x="108" y="2" width="8" height="1" fill="#a85c1c" opacity="0.6"/><rect x="23" y="8" width="21" height="1" fill="#e0a060" opacity="0.6"/><rect x="91" y="14" width="24" height="1" fill="#e0a060" opacity="0.6"/><rect x="7" y="10" width="24" height="1" fill="#e0a060" opacity="0.6"/><rect x="97" y="15" width="7" height="1" fill="#b86a28" opacity="0.8"/><rect x="164" y="18" width="34" height="1" fill="#a85c1c" opacity="0.6"/><rect x="32" y="17" width="23" height="1" fill="#b86a28" opacity="0.8"/><rect x="226" y="8" width="7" height="1" fill="#e0a060" opacity="0.6"/><rect x="28" y="14" width="36" height="1" fill="#b86a28" opacity="0.8"/><rect x="24" y="16" width="47" height="1" fill="#d89050" opacity="0.8"/><rect x="173" y="11" width="51" height="1" fill="#d89050" opacity="0.8"/><rect x="75" y="20" width="19" height="1" fill="#b86a28" opacity="0.8"/><rect x="193" y="10" width="39" height="1" fill="#e0a060" opacity="0.6"/><rect x="170" y="15" width="35" height="1" fill="#e0a060" opacity="0.6"/><rect x="15" y="9" width="46" height="1" fill="#d89050" opacity="0.8"/><rect x="165" y="20" width="12" height="1" fill="#a85c1c" opacity="0.6"/><rect x="94" y="20" width="32" height="1" fill="#a85c1c" opacity="0.6"/><rect x="27" y="17" width="12" height="1" fill="#e0a060" opacity="0.6"/><rect x="165" y="20" width="41" height="1" fill="#d89050" opacity="0.8"/><rect x="142" y="9" width="44" height="1" fill="#b86a28" opacity="0.8"/><rect x="117" y="15" width="22" height="1" fill="#a85c1c" opacity="0.6"/><rect x="180" y="2" width="9" height="1" fill="#a85c1c" opacity="0.6"/><rect x="193" y="17" width="37" height="1" fill="#a85c1c" opacity="0.6"/><rect x="91" y="3" width="20" height="1" fill="#b86a28" opacity="0.8"/><rect x="98" y="1" width="58" height="1" fill="#d89050" opacity="0.8"/><rect x="10" y="15" width="35" height="1" fill="#a85c1c" opacity="0.6"/><rect x="63" y="16" width="25" height="1" fill="#d89050" opacity="0.8"/><rect x="103" y="14" width="37" height="1" fill="#d89050" opacity="0.8"/><rect x="90" y="15" width="10" height="1" fill="#e0a060" opacity="0.6"/><rect x="69" y="18" width="9" height="1" fill="#a85c1c" opacity="0.6"/><rect x="144" y="3" width="14" height="1" fill="#e0a060" opacity="0.6"/><rect x="145" y="13" width="28" height="1" fill="#a85c1c" opacity="0.6"/><rect x="151" y="19" width="12" height="1" fill="#a85c1c" opacity="0.6"/><rect x="204" y="6" width="37" height="1" fill="#b86a28" opacity="0.8"/><rect x="-36" y="6" width="37" height="1" fill="#b86a28" opacity="0.8"/><rect x="145" y="5" width="15" height="1" fill="#a85c1c" opacity="0.6"/><rect x="94" y="9" width="4" height="1" fill="#d89050" opacity="0.8"/><rect x="228" y="13" width="27" height="1" fill="#b86a28" opacity="0.8"/><rect x="-12" y="13" width="27" height="1" fill="#b86a28" opacity="0.8"/><rect x="141" y="18" width="22" height="1" fill="#d89050" opacity="0.8"/><rect x="135" y="9" width="45" height="1" fill="#b86a28" opacity="0.8"/><rect x="7" y="19" width="15" height="1" fill="#b86a28" opacity="0.8"/><rect x="27" y="7" width="34" height="1" fill="#e0a060" opacity="0.6"/><rect x="134" y="20" width="32" height="1" fill="#a85c1c" opacity="0.6"/><rect x="49" y="16" width="16" height="1" fill="#a85c1c" opacity="0.6"/><rect x="208" y="16" width="31" height="1" fill="#e0a060" opacity="0.6"/><rect x="144" y="9" width="12" height="1" fill="#e0a060" opacity="0.6"/><rect x="119" y="2" width="6" height="1" fill="#a85c1c" opacity="0.6"/><rect x="92" y="19" width="17" height="1" fill="#e0a060" opacity="0.6"/><rect x="127" y="17" width="4" height="1" fill="#e0a060" opacity="0.6"/></pattern></defs></svg>
<div class="abs dk" style="left:666px;top:0;width:1px;height:470px"></div>
<svg class="abs" style="left:667px;top:0px" width="613" height="21"><rect width="613" height="21" fill="url(#pwl)"/></svg>
<div class="abs dk" style="left:667px;top:21px;width:613px;height:1px"></div>
<div class="abs" style="left:667px;top:22px;width:613px;height:444px;background:#fff;overflow:hidden"><div class="ln" style="left:2px;top:3px">12:39:42 Result is kept for 500 seconds</div>
<div class="ln" style="left:2px;top:23px">12:39:42 <span style="color:#00cd00">default</span>: <span style="color:#0000cd">worker.do_work()</span> (fd9d31bb-a7a9-4184-a2c4-85911ae9dfb7)</div>
<div class="ln" style="left:2px;top:43px">Working</div>
<div class="ln" style="left:2px;top:63px">Done</div>
<div class="ln" style="left:2px;top:83px">12:39:44 <span style="color:#00cd00">default</span>: <span style="color:#0000cd">Job OK</span> (fd9d31bb-a7a9-4184-a2c4-85911ae9dfb7)</div>
<div class="ln" style="left:2px;top:103px">12:39:44 Result is kept for 500 seconds</div>
<div class="ln" style="left:2px;top:123px">12:39:44 <span style="color:#00cd00">default</span>: <span style="color:#0000cd">worker.do_work()</span> (b8439e75-c220-4463-8921-5a097545c71c)</div>
<div class="ln" style="left:2px;top:143px">Working</div>
<div class="ln" style="left:2px;top:163px">Done</div>
<div class="ln" style="left:2px;top:183px">12:39:46 <span style="color:#00cd00">default</span>: <span style="color:#0000cd">Job OK</span> (b8439e75-c220-4463-8921-5a097545c71c)</div>
<div class="ln" style="left:2px;top:203px">12:39:46 Result is kept for 500 seconds</div>
<div class="ln" style="left:2px;top:223px">12:39:46 <span style="color:#00cd00">default</span>: <span style="color:#0000cd">worker.do_work()</span> (07f2a6e9-349a-4278-87c6-979fb32a3e9e)</div>
<div class="ln" style="left:2px;top:243px">Working</div>
<div class="ln" style="left:2px;top:263px">Done</div>
<div class="ln" style="left:2px;top:283px">12:39:48 <span style="color:#00cd00">default</span>: <span style="color:#0000cd">Job OK</span> (07f2a6e9-349a-4278-87c6-979fb32a3e9e)</div>
<div class="ln" style="left:2px;top:303px">12:39:48 Result is kept for 500 seconds</div>
<div class="ln" style="left:2px;top:323px">12:39:48 <span style="color:#00cd00">default</span>: <span style="color:#0000cd">worker.do_work()</span> (2f22aa9a-582c-4616-89ae-7347f8714785)</div>
<div class="ln" style="left:2px;top:343px">Working</div>
<div class="ln" style="left:2px;top:363px">Done</div>
<div class="ln" style="left:2px;top:383px">12:39:50 <span style="color:#00cd00">default</span>: <span style="color:#0000cd">Job OK</span> (2f22aa9a-582c-4616-89ae-7347f8714785)</div>
<div class="ln" style="left:2px;top:403px">12:39:50 Result is kept for 500 seconds</div><div class="abs" style="left:2px;top:422px;width:8px;height:18px;border:1px solid #ff0000"></div></div>
<div class="abs dk" style="left:667px;top:466px;width:613px;height:4px"></div>
<div class="abs gp" style="left:667px;top:467px;width:21px;height:2px"></div>
<div class="abs" style="left:688px;top:467px;width:592px;height:2px;background:#fff"></div>
<div class="abs" style="left:676px;top:9px;width:3px;height:3px;background:#4a4a3a"></div>
<svg style="position:absolute;left:694px;top:6px" width="10" height="10" shape-rendering="crispEdges"><rect x="0" y="0" width="4" height="1" fill="#ff1a00"/><rect x="6" y="0" width="4" height="1" fill="#ff1a00"/><rect x="1" y="1" width="3" height="1" fill="#2a8a9a"/><rect x="7" y="1" width="1" height="1" fill="#2a8a9a"/><rect x="1" y="2" width="1" height="1" fill="#0000d0"/><rect x="2" y="2" width="2" height="1" fill="#ff1a00"/><rect x="6" y="2" width="1" height="1" fill="#ff1a00"/><rect x="8" y="2" width="1" height="1" fill="#0000d0"/><rect x="0" y="3" width="1" height="1" fill="#0a6aff"/><rect x="3" y="3" width="1" height="1" fill="#ff1a00"/><rect x="9" y="3" width="1" height="1" fill="#0a6aff"/><rect x="4" y="2" width="2" height="7" fill="#0a6aff"/><rect x="3" y="6" width="1" height="1" fill="#ff1a00"/><rect x="6" y="6" width="1" height="1" fill="#ff1a00"/><rect x="2" y="7" width="1" height="1" fill="#ff1a00"/><rect x="6" y="7" width="2" height="1" fill="#ff1a00"/><rect x="2" y="8" width="1" height="1" fill="#ff1a00"/><rect x="3" y="8" width="4" height="1" fill="#0a6aff"/><rect x="4" y="8" width="2" height="1" fill="#0000d0"/><rect x="7" y="8" width="1" height="1" fill="#ff1a00"/><rect x="0" y="9" width="3" height="1" fill="#ff1a00"/><rect x="6" y="9" width="4" height="1" fill="#ff1a00"/></svg>
<div class="title" style="left:1040px;top:0;color:#4c4c40">xterm</div>
<div class="abs dk" style="left:0;top:470px;width:666px;height:531px"></div>
<svg class="abs" style="left:1px;top:471px" width="664" height="21"><rect width="664" height="21" fill="url(#pwa)"/></svg>
<div class="abs" style="left:1px;top:493px;width:664px;height:504px;background:#fff;overflow:hidden"><div class="ln" style="left:2px;top:3px"><span style="color:#00cd00">tester@tester</span> <span class="tl" style="color:#0a5cff;left:-2px">~</span><span style="color:#0a5cff;position:relative;left:-2px"> $</span></div>
<div class="ln" style="left:2px;top:43px">-bash-4.4$ cd temp/python/message-queues-examples/rq/example01</div>
<div class="ln" style="left:2px;top:63px">  <span class="tl" style="color:#a81818">~</span><span style="color:#a81818">/temp/python/message-queues-examples/rq/example01</span> [ <span style="color:#cc00cc">master</span> |<span style="color:#1a7f8f">…1</span>]</div>
<div class="ln" style="left:2px;top:83px"><span style="color:#787870">12:39</span> $ python3 enqueue_more_work.py</div>
<div class="ln" style="left:2px;top:103px">&lt;Job 3ba49478-a68b-4e6b-bd58-f25f05566164: worker.do_work()&gt;</div>
<div class="ln" style="left:2px;top:123px">&lt;Job 12bbfccf-e2ef-435e-9dae-ffcdd4fef28b: worker.do_work()&gt;</div>
<div class="ln" style="left:2px;top:143px">&lt;Job fd9d31bb-a7a9-4184-a2c4-85911ae9dfb7: worker.do_work()&gt;</div>
<div class="ln" style="left:2px;top:163px">&lt;Job 4357f8fc-4794-423c-8817-02349579b5da: worker.do_work()&gt;</div>
<div class="ln" style="left:2px;top:183px">&lt;Job b8439e75-c220-4463-8921-5a097545c71c: worker.do_work()&gt;</div>
<div class="ln" style="left:2px;top:203px">&lt;Job 60e53d34-d853-4f40-9d28-fbc8e73aaa2f: worker.do_work()&gt;</div>
<div class="ln" style="left:2px;top:223px">&lt;Job 02be264e-94b3-40e8-ad4e-327db830158f: worker.do_work()&gt;</div>
<div class="ln" style="left:2px;top:243px">&lt;Job 07f2a6e9-349a-4278-87c6-979fb32a3e9e: worker.do_work()&gt;</div>
<div class="ln" style="left:2px;top:263px">&lt;Job 2f22aa9a-582c-4616-89ae-7347f8714785: worker.do_work()&gt;</div>
<div class="ln" style="left:2px;top:283px">&lt;Job fa00e409-0116-430a-8bc9-830bd5227bfa: worker.do_work()&gt;</div>
<div class="ln" style="left:2px;top:303px">&lt;Job 32568fe8-7a52-4ff6-894f-89e6b5167af7: worker.do_work()&gt;</div>
<div class="ln" style="left:2px;top:323px">  <span class="tl" style="color:#a81818">~</span><span style="color:#a81818">/temp/python/message-queues-examples/rq/example01</span> [ <span style="color:#cc00cc">master</span> |<span style="color:#1a7f8f">…1</span>]</div>
<div class="ln" style="left:2px;top:343px"><span style="color:#787870">12:39</span> $ </div><div class="abs" style="left:82px;top:342px;width:10px;height:20px;background:#ff0000"></div></div>
<div class="abs gp" style="left:1px;top:998px;width:21px;height:2px"></div>
<div class="abs" style="left:22px;top:998px;width:622px;height:2px;background:#b0d888"></div>
<div class="abs gp" style="left:644px;top:998px;width:21px;height:2px"></div>
<div class="abs" style="left:10px;top:480px;width:3px;height:3px;background:#fff"></div>
<svg style="position:absolute;left:28px;top:477px" width="10" height="10" shape-rendering="crispEdges"><rect x="0" y="0" width="4" height="1" fill="#ff1a00"/><rect x="6" y="0" width="4" height="1" fill="#ff1a00"/><rect x="1" y="1" width="3" height="1" fill="#2a8a9a"/><rect x="7" y="1" width="1" height="1" fill="#2a8a9a"/><rect x="1" y="2" width="1" height="1" fill="#0000d0"/><rect x="2" y="2" width="2" height="1" fill="#ff1a00"/><rect x="6" y="2" width="1" height="1" fill="#ff1a00"/><rect x="8" y="2" width="1" height="1" fill="#0000d0"/><rect x="0" y="3" width="1" height="1" fill="#0a6aff"/><rect x="3" y="3" width="1" height="1" fill="#ff1a00"/><rect x="9" y="3" width="1" height="1" fill="#0a6aff"/><rect x="4" y="2" width="2" height="7" fill="#0a6aff"/><rect x="3" y="6" width="1" height="1" fill="#ff1a00"/><rect x="6" y="6" width="1" height="1" fill="#ff1a00"/><rect x="2" y="7" width="1" height="1" fill="#ff1a00"/><rect x="6" y="7" width="2" height="1" fill="#ff1a00"/><rect x="2" y="8" width="1" height="1" fill="#ff1a00"/><rect x="3" y="8" width="4" height="1" fill="#0a6aff"/><rect x="4" y="8" width="2" height="1" fill="#0000d0"/><rect x="7" y="8" width="1" height="1" fill="#ff1a00"/><rect x="0" y="9" width="3" height="1" fill="#ff1a00"/><rect x="6" y="9" width="4" height="1" fill="#ff1a00"/></svg>
<div class="title" style="left:304px;top:471px;color:#fff">xterm</div>
<div class="abs" style="left:616px;top:483px;width:7px;height:1px;border:1px solid #fff"></div>
<div class="abs" style="left:633px;top:477px;width:7px;height:6px;border:1px solid #fff;border-top-width:2px"></div>
<svg class="abs" style="left:650px;top:477px" width="9" height="10"><path d="M0.5,0.5 L8.5,8.5 M8.5,0.5 L0.5,8.5" stroke="#fff" stroke-width="1.2"/></svg>
<div class="abs dk" style="left:666px;top:470px;width:614px;height:531px"></div>
<svg class="abs" style="left:667px;top:471px" width="613" height="21"><rect width="613" height="21" fill="url(#pwl)"/></svg>
<div class="abs" style="left:667px;top:493px;width:613px;height:504px;background:#fff;overflow:hidden"><div class="ln" style="left:2px;top:3px">Working</div>
<div class="ln" style="left:2px;top:23px">Done</div>
<div class="ln" style="left:2px;top:43px">12:39:44 <span style="color:#00cd00">default</span>: <span style="color:#0000cd">Job OK</span> (4357f8fc-4794-423c-8817-02349579b5da)</div>
<div class="ln" style="left:2px;top:63px">12:39:44 Result is kept for 500 seconds</div>
<div class="ln" style="left:2px;top:83px">12:39:44 <span style="color:#00cd00">default</span>: <span style="color:#0000cd">worker.do_work()</span> (60e53d34-d853-4f40-9d28-fbc8e73aaa2f)</div>
<div class="ln" style="left:2px;top:103px">Working</div>
<div class="ln" style="left:2px;top:123px">Done</div>
<div class="ln" style="left:2px;top:143px">12:39:46 <span style="color:#00cd00">default</span>: <span style="color:#0000cd">Job OK</span> (60e53d34-d853-4f40-9d28-fbc8e73aaa2f)</div>
<div class="ln" style="left:2px;top:163px">12:39:46 Result is kept for 500 seconds</div>
<div class="ln" style="left:2px;top:183px">12:39:46 <span style="color:#00cd00">default</span>: <span style="color:#0000cd">worker.do_work()</span> (02be264e-94b3-40e8-ad4e-327db830158f)</div>
<div class="ln" style="left:2px;top:203px">Working</div>
<div class="ln" style="left:2px;top:223px">Done</div>
<div class="ln" style="left:2px;top:243px">12:39:48 <span style="color:#00cd00">default</span>: <span style="color:#0000cd">Job OK</span> (02be264e-94b3-40e8-ad4e-327db830158f)</div>
<div class="ln" style="left:2px;top:263px">12:39:48 Result is kept for 500 seconds</div>
<div class="ln" style="left:2px;top:283px">12:39:48 <span style="color:#00cd00">default</span>: <span style="color:#0000cd">worker.do_work()</span> (fa00e409-0116-430a-8bc9-830bd5227bfa)</div>
<div class="ln" style="left:2px;top:303px">Working</div>
<div class="ln" style="left:2px;top:323px">Done</div>
<div class="ln" style="left:2px;top:343px">12:39:50 <span style="color:#00cd00">default</span>: <span style="color:#0000cd">Job OK</span> (fa00e409-0116-430a-8bc9-830bd5227bfa)</div>
<div class="ln" style="left:2px;top:363px">12:39:50 Result is kept for 500 seconds</div>
<div class="ln" style="left:2px;top:383px">12:39:50 <span style="color:#00cd00">default</span>: <span style="color:#0000cd">worker.do_work()</span> (32568fe8-7a52-4ff6-894f-89e6b5167af7)</div>
<div class="ln" style="left:2px;top:403px">Working</div>
<div class="ln" style="left:2px;top:423px">Done</div>
<div class="ln" style="left:2px;top:443px">12:39:52 <span style="color:#00cd00">default</span>: <span style="color:#0000cd">Job OK</span> (32568fe8-7a52-4ff6-894f-89e6b5167af7)</div>
<div class="ln" style="left:2px;top:463px">12:39:52 Result is kept for 500 seconds</div><div class="abs" style="left:2px;top:482px;width:8px;height:18px;border:1px solid #ff0000"></div></div>
<div class="abs gp" style="left:667px;top:998px;width:21px;height:2px"></div>
<div class="abs" style="left:688px;top:998px;width:592px;height:2px;background:#fff"></div>
<div class="abs" style="left:676px;top:480px;width:3px;height:3px;background:#4a4a3a"></div>
<svg style="position:absolute;left:694px;top:477px" width="10" height="10" shape-rendering="crispEdges"><rect x="0" y="0" width="4" height="1" fill="#ff1a00"/><rect x="6" y="0" width="4" height="1" fill="#ff1a00"/><rect x="1" y="1" width="3" height="1" fill="#2a8a9a"/><rect x="7" y="1" width="1" height="1" fill="#2a8a9a"/><rect x="1" y="2" width="1" height="1" fill="#0000d0"/><rect x="2" y="2" width="2" height="1" fill="#ff1a00"/><rect x="6" y="2" width="1" height="1" fill="#ff1a00"/><rect x="8" y="2" width="1" height="1" fill="#0000d0"/><rect x="0" y="3" width="1" height="1" fill="#0a6aff"/><rect x="3" y="3" width="1" height="1" fill="#ff1a00"/><rect x="9" y="3" width="1" height="1" fill="#0a6aff"/><rect x="4" y="2" width="2" height="7" fill="#0a6aff"/><rect x="3" y="6" width="1" height="1" fill="#ff1a00"/><rect x="6" y="6" width="1" height="1" fill="#ff1a00"/><rect x="2" y="7" width="1" height="1" fill="#ff1a00"/><rect x="6" y="7" width="2" height="1" fill="#ff1a00"/><rect x="2" y="8" width="1" height="1" fill="#ff1a00"/><rect x="3" y="8" width="4" height="1" fill="#0a6aff"/><rect x="4" y="8" width="2" height="1" fill="#0000d0"/><rect x="7" y="8" width="1" height="1" fill="#ff1a00"/><rect x="0" y="9" width="3" height="1" fill="#ff1a00"/><rect x="6" y="9" width="4" height="1" fill="#ff1a00"/></svg>
<div class="title" style="left:1040px;top:471px;color:#4c4c40">xterm</div>
<div class="abs dk" style="left:0;top:1001px;width:1280px;height:23px"></div>
<svg class="abs" style="left:1px;top:1002px" width="302" height="21"><rect width="302" height="21" fill="url(#pwl)"/></svg>
<svg class="abs" style="left:304px;top:1002px" width="233" height="21"><rect width="233" height="21" fill="url(#pwl)"/></svg>
<svg style="position:absolute;left:306px;top:1004px" width="18" height="18">
<rect x="0" y="0" width="8" height="2" fill="#ff1a00"/><rect x="11" y="0" width="6" height="2" fill="#ff1a00"/>
<polygon points="4,2 7.5,2 14.5,16 11,16" fill="#ff1a00"/>
<polygon points="11,2 14,2 6.5,16 3,16" fill="#ff1a00"/>
<rect x="0" y="16" width="6" height="2" fill="#ff1a00"/><rect x="10" y="16" width="8" height="2" fill="#ff1a00"/>
<path d="M1.5,7 Q2,3.6 4.5,3.6 L13.5,3.6 Q15.5,3.6 16.3,7" stroke="#0000cc" stroke-width="1.6" fill="none"/>
<rect x="8" y="3" width="3" height="12" fill="#0000cc"/>
<rect x="5" y="15" width="8" height="1.2" fill="#1a7fff"/>
</svg>
<div class="tb" style="left:415px;top:1003px;font-size:12px;letter-spacing:0.3px;line-height:21px;color:#5c5c4c">xterm</div>
<svg class="abs" style="left:538px;top:1002px" width="232" height="21"><rect width="232" height="21" fill="url(#pwl)"/></svg>
<svg style="position:absolute;left:540px;top:1004px" width="18" height="18">
<rect x="0" y="0" width="8" height="2" fill="#ff1a00"/><rect x="11" y="0" width="6" height="2" fill="#ff1a00"/>
<polygon points="4,2 7.5,2 14.5,16 11,16" fill="#ff1a00"/>
<polygon points="11,2 14,2 6.5,16 3,16" fill="#ff1a00"/>
<rect x="0" y="16" width="6" height="2" fill="#ff1a00"/><rect x="10" y="16" width="8" height="2" fill="#ff1a00"/>
<path d="M1.5,7 Q2,3.6 4.5,3.6 L13.5,3.6 Q15.5,3.6 16.3,7" stroke="#0000cc" stroke-width="1.6" fill="none"/>
<rect x="8" y="3" width="3" height="12" fill="#0000cc"/>
<rect x="5" y="15" width="8" height="1.2" fill="#1a7fff"/>
</svg>
<div class="tb" style="left:649px;top:1003px;font-size:12px;letter-spacing:0.3px;line-height:21px;color:#5c5c4c">xterm</div>
<svg class="abs" style="left:771px;top:1002px" width="232" height="21"><rect width="232" height="21" fill="url(#pwl)"/></svg>
<svg style="position:absolute;left:773px;top:1004px" width="18" height="18">
<rect x="0" y="0" width="8" height="2" fill="#ff1a00"/><rect x="11" y="0" width="6" height="2" fill="#ff1a00"/>
<polygon points="4,2 7.5,2 14.5,16 11,16" fill="#ff1a00"/>
<polygon points="11,2 14,2 6.5,16 3,16" fill="#ff1a00"/>
<rect x="0" y="16" width="6" height="2" fill="#ff1a00"/><rect x="10" y="16" width="8" height="2" fill="#ff1a00"/>
<path d="M1.5,7 Q2,3.6 4.5,3.6 L13.5,3.6 Q15.5,3.6 16.3,7" stroke="#0000cc" stroke-width="1.6" fill="none"/>
<rect x="8" y="3" width="3" height="12" fill="#0000cc"/>
<rect x="5" y="15" width="8" height="1.2" fill="#1a7fff"/>
</svg>
<div class="tb" style="left:882px;top:1003px;font-size:12px;letter-spacing:0.3px;line-height:21px;color:#5c5c4c">xterm</div>
<svg class="abs" style="left:1004px;top:1002px" width="232" height="21"><rect width="232" height="21" fill="url(#pwd)"/></svg>
<svg style="position:absolute;left:1006px;top:1004px" width="18" height="18">
<rect x="0" y="0" width="8" height="2" fill="#ff1a00"/><rect x="11" y="0" width="6" height="2" fill="#ff1a00"/>
<polygon points="4,2 7.5,2 14.5,16 11,16" fill="#ff1a00"/>
<polygon points="11,2 14,2 6.5,16 3,16" fill="#ff1a00"/>
<rect x="0" y="16" width="6" height="2" fill="#ff1a00"/><rect x="10" y="16" width="8" height="2" fill="#ff1a00"/>
<path d="M1.5,7 Q2,3.6 4.5,3.6 L13.5,3.6 Q15.5,3.6 16.3,7" stroke="#0000cc" stroke-width="1.6" fill="none"/>
<rect x="8" y="3" width="3" height="12" fill="#0000cc"/>
<rect x="5" y="15" width="8" height="1.2" fill="#1a7fff"/>
</svg>
<div class="tb" style="left:1112px;top:1003px;font-size:12.5px;line-height:21px;font-weight:bold;color:#fff">xterm</div>
<svg class="abs" style="left:1237px;top:1002px" width="42" height="21"><rect width="42" height="21" fill="url(#pwl)"/></svg>
<svg class="abs" style="left:1237px;top:1002px" width="43" height="21">
<rect x="1" y="4" width="6" height="5" fill="#e0b020"/>
<path d="M2,4.5 Q2,1.5 4.5,1.5 Q6.5,1.5 6.5,3.5" stroke="#90c070" stroke-width="1" fill="none"/>
<polygon points="3.5,12.5 7,12.5 7,9.5 10,9.5 10,6.5 13,6.5 13,3.5 17.5,3.5 17.5,17.5 3.5,17.5" fill="#1f8fb0" stroke="#101010" stroke-width="1"/>
<rect x="15" y="4" width="2" height="13" fill="#e8f4d0"/>
<polygon points="27.5,1.5 36.5,1.5 41.5,6.5 41.5,14.5 36.5,19.5 27.5,19.5 22.5,14.5 22.5,6.5" fill="#e8b818" stroke="#707060" stroke-width="1" stroke-dasharray="1.5,0.7"/>
<polygon points="22.5,11 41.5,11 41.5,14.5 36.5,19.5 27.5,19.5 22.5,14.5" fill="#ff2400"/>
<polygon points="26.5,5.5 37.5,5.5 32,10.5" fill="#d8c890" stroke="#707060" stroke-width="1"/>
<polygon points="27.5,17 36.5,17 32,12.5" fill="#e0d0a0" stroke="#707060" stroke-width="1"/>
<polygon points="25,11 28,7.5 30.5,11 28,14.5" fill="#f0e0b0" stroke="#707060" stroke-width="0.8"/>
<polygon points="34,11 36.5,7.5 39.5,11 36.5,14.5" fill="#f0e0b0" stroke="#707060" stroke-width="0.8"/>
</svg>
<div class="tb" style="left:22px;top:1003px;font-size:14.6px;line-height:21px;font-weight:bold;letter-spacing:0.95px;color:#48483a;-webkit-text-stroke:0.25px #48483a">Workspace 3</div>
<div class="tb" style="left:150px;top:1003px;font-size:14.6px;line-height:21px;font-weight:bold;letter-spacing:0.25px;color:#48483a;-webkit-text-stroke:0.25px #48483a">28.11, St 12:40</div>
<svg class="abs" style="left:7px;top:1009px" width="9" height="9"><polygon points="8,0 8,8 0,4" fill="#5a5a40"/></svg>
<svg class="abs" style="left:128px;top:1009px" width="9" height="9"><polygon points="0,0 0,8 8,4" fill="#5a5a40"/></svg>
<svg class="abs" style="left:267px;top:1009px" width="9" height="9"><polygon points="8,0 8,8 0,4" fill="#5a5a40"/></svg>
<svg class="abs" style="left:288px;top:1009px" width="9" height="9"><polygon points="0,0 0,8 8,4" fill="#5a5a40"/></svg>
</body></html>
